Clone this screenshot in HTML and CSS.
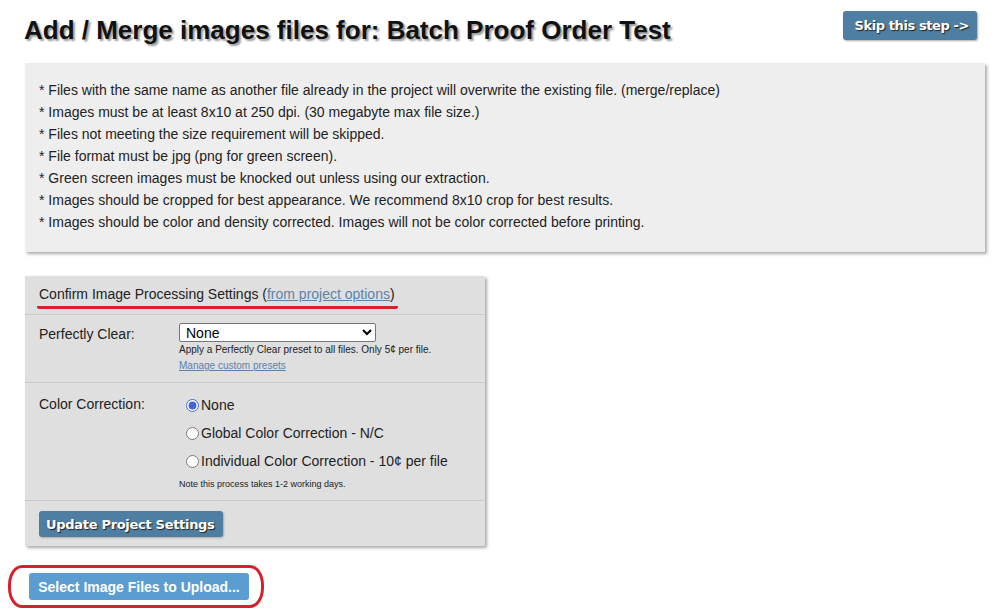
FILE: index.html
```html
<!DOCTYPE html>
<html lang="en">
    <head>
        <meta charset="UTF-8" />
        <title>Add / Merge images</title>
        <link rel="stylesheet" href="styles.css">
    </head>
    <body>
        <div class="stranka">
            <div class="hlava">
                <h1>Add / Merge images files for: Batch Proof Order Test</h1>
                <a class="tlacitko skip" href="#">Skip this step -&gt;</a>
            </div>

            <div class="pravidla">
                <p>* Files with the same name as another file already in the project will overwrite the existing file. (merge/replace)</p>
                <p>* Images must be at least 8x10 at 250 dpi. (30 megabyte max file size.)</p>
                <p>* Files not meeting the size requirement will be skipped.</p>
                <p>* File format must be jpg (png for green screen).</p>
                <p>* Green screen images must be knocked out unless using our extraction.</p>
                <p>* Images should be cropped for best appearance. We recommend 8x10 crop for best results.</p>
                <p>* Images should be color and density corrected. Images will not be color corrected before printing.</p>
            </div>

            <form class="panel">
                <div class="radek nadpis">
                    <span class="podtrzeno">Confirm Image Processing Settings (<a href="#">from project options</a>)</span>
                </div>
                <div class="radek">
                    <label class="popisek">Perfectly Clear:</label>
                    <div class="pole">
                        <select class="vyber">
                            <option>None</option>
                        </select>
                        <div class="mala">Apply a Perfectly Clear preset to all files. Only 5&cent; per file.</div>
                        <a class="mala odkaz" href="#">Manage custom presets</a>
                    </div>
                </div>
                <div class="radek">
                    <label class="popisek dole">Color Correction:</label>
                    <div class="pole">
                        <label class="volba"><input type="radio" name="cc" checked>None</label>
                        <label class="volba"><input type="radio" name="cc">Global Color Correction - N/C</label>
                        <label class="volba"><input type="radio" name="cc">Individual Color Correction - 10&cent; per file</label>
                        <div class="mala poznamka">Note this process takes 1-2 working days.</div>
                    </div>
                </div>
                <div class="radek spodek">
                    <button type="button" class="tlacitko">Update Project Settings</button>
                </div>
            </form>

            <div class="nahrani">
                <span class="krouzek">
                    <button type="button" class="upload">Select Image Files to Upload...</button>
                </span>
            </div>
        </div>
    </body>
</html>
```

FILE: styles.css
```css
body {
    margin: 0;
    font-family: "Liberation Sans", Arial, sans-serif;
    font-size: 14px;
    color: #222;
    background: #fff;
}

.stranka {
    padding: 11px 19px 0 24px;
}

.hlava {
    display: flex;
    justify-content: space-between;
    align-items: flex-start;
}

h1 {
    margin: 3px 0 0;
    font-size: 26px;
    line-height: 32px;
    font-weight: bold;
    color: #111;
    text-shadow: 2px 2px 2px #999;
}

/* tmave modra tlacitka */
.tlacitko {
    display: inline-block;
    background-color: #4f7ea3;
    color: #fff;
    font-family: "DejaVu Sans", Verdana, sans-serif;
    font-weight: bold;
    font-size: 13px;
    letter-spacing: -0.4px;
    text-decoration: none;
    text-shadow: 1px 1px 1px #222;
    border: none;
    border-radius: 3px;
    box-shadow: 1px 1px 2px #aaa;
    cursor: pointer;
}

.skip {
    margin-right: 8px;
    padding: 6px 8px 6px 11px;
    line-height: 17px;
}

.pravidla {
    margin: 17px 0 0 1px;
    background-color: #eee;
    padding: 16px 14px 19px;
    box-shadow: 2px 2px 3px #aaa;
}

.pravidla p {
    margin: 0;
    line-height: 22px;
}

.panel {
    width: 460px;
    margin: 24px 0 0 1px;
    background-color: #dfdfdf;
    box-shadow: 2px 2px 3px #aaa;
}

.radek {
    display: flex;
    padding: 8px 14px;
    border-bottom: 1px solid #c9c9c9;
}

.nadpis {
    padding: 10px 14px 5px;
    line-height: 17px;
    align-items: flex-start;
}

.podtrzeno {
    margin-left: -2px;
    padding: 0 3px 3px 2px;
    border-bottom: 3px solid #d8202c;
    border-radius: 2px;
}

.podtrzeno a {
    color: #5d82a8;
}

.popisek {
    width: 140px;
    flex: none;
    line-height: 18px;
    padding-top: 2px;
}

.popisek.dole {
    padding-top: 4px;
}

.vyber {
    display: block;
    width: 197px;
    height: 19px;
    font-family: inherit;
    font-size: 14px;
    border: 1px solid #767676;
    border-radius: 2px;
    background: #fff;
    padding: 0 2px;
}

.mala {
    font-size: 10px;
    line-height: 16px;
    color: #222;
}

.mala.odkaz {
    display: block;
    color: #5d82a8;
}

.volba {
    display: flex;
    align-items: center;
    height: 28px;
    margin-left: 7px;
}

.volba input {
    margin: 0 2px 0 0;
    width: 13px;
    height: 13px;
    accent-color: #3f66d9;
}

.poznamka {
    margin-top: 1px;
    font-size: 9px;
}

.spodek {
    border-bottom: none;
    padding: 10px 14px 9px;
}

.spodek .tlacitko {
    height: 26px;
    padding: 0 8px 0 7px;
    font-size: 13px;
    letter-spacing: -0.3px;
}

.nahrani {
    margin: 19px 0 0 -16px;
}

.krouzek {
    display: inline-block;
    padding: 5px 12px 5px 18px;
    border: 3px solid #d8202c;
    border-radius: 14px / 20px;
}

.upload {
    display: block;
    width: 220px;
    height: 27px;
    background-color: #5b9dd1;
    color: #fff;
    border: none;
    border-radius: 3px;
    font-family: "Liberation Sans", Arial, sans-serif;
    font-weight: bold;
    font-size: 14px;
    cursor: pointer;
}
```
